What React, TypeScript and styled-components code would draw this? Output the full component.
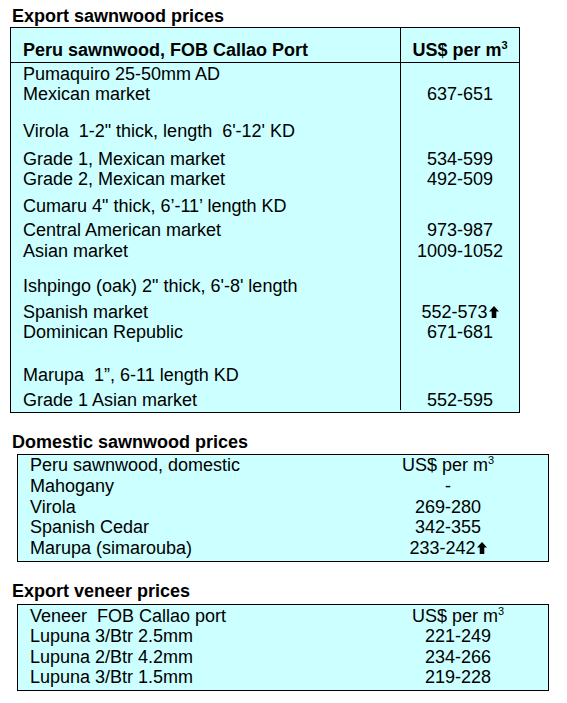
import styled, { createGlobalStyle } from "styled-components";

interface PriceRow {
  label: string;
  value?: string;
  up?: boolean;
  gap?: number;
}

const EXPORT_SAWNWOOD: PriceRow[] = [
  { label: "Pumaquiro 25-50mm AD", gap: 1 },
  { label: "Mexican market", value: "637-651" },
  { label: "Virola  1-2\" thick, length  6'-12' KD", gap: 17 },
  { label: "Grade 1, Mexican market", value: "534-599", gap: 8 },
  { label: "Grade 2, Mexican market", value: "492-509" },
  { label: "Cumaru 4\" thick, 6’-11’ length KD", gap: 7 },
  { label: "Central American market", value: "973-987", gap: 4 },
  { label: "Asian market", value: "1009-1052", gap: 1 },
  { label: "Ishpingo (oak) 2\" thick, 6'-8' length", gap: 15 },
  { label: "Spanish market", value: "552-573", up: true, gap: 6 },
  { label: "Dominican Republic", value: "671-681" },
  { label: "Marupa  1”, 6-11 length KD", gap: 23 },
  { label: "Grade 1 Asian market", value: "552-595", gap: 5 },
];

const DOMESTIC_SAWNWOOD: PriceRow[] = [
  { label: "Mahogany", value: "-" },
  { label: "Virola", value: "269-280" },
  { label: "Spanish Cedar", value: "342-355" },
  { label: "Marupa (simarouba)", value: "233-242", up: true },
];

const EXPORT_VENEER: PriceRow[] = [
  { label: "Lupuna 3/Btr 2.5mm", value: "221-249" },
  { label: "Lupuna 2/Btr 4.2mm", value: "234-266" },
  { label: "Lupuna 3/Btr 1.5mm", value: "219-228" },
];

const GlobalStyle = createGlobalStyle`
  html, body {
    margin: 0;
    padding: 0;
    background: #ffffff;
  }
  body {
    font-family: "Liberation Sans", Arial, sans-serif;
    color: #000000;
  }
`;

const Page = styled.div`
  width: 567px;
  padding-top: 6px;
  font-size: 18px;
  line-height: 20px;
`;

const SectionTitle = styled.h2<{ $top: number; $bottom: number }>`
  margin: ${({ $top, $bottom }) => `${$top}px 0 ${$bottom}px 12px`};
  font-size: 18px;
  line-height: 20px;
  font-weight: 700;
`;

const Table = styled.div<{ $left: number; $width: number; $padTop: number }>`
  box-sizing: border-box;
  margin-left: ${({ $left }) => $left}px;
  width: ${({ $width }) => $width}px;
  border: 1px solid #000000;
  background: #ccffff;
  padding-bottom: 2px;
  padding-top: ${({ $padTop }) => $padTop}px;
`;

const Row = styled.div<{ $labelWidth: number; $lineHeight: number }>`
  display: grid;
  grid-template-columns: ${({ $labelWidth }) => $labelWidth}px 1fr;
  line-height: ${({ $lineHeight }) => $lineHeight}px;
`;

const HeaderRow = styled(Row)`
  border-bottom: 1px solid #000000;
  font-weight: 700;
`;

const Label = styled.div<{ $gap: number; $indent: number }>`
  padding-top: ${({ $gap }) => $gap}px;
  padding-left: ${({ $indent }) => $indent}px;
  white-space: pre;
`;

const Value = styled.div<{ $gap: number; $ruled: boolean }>`
  padding-top: ${({ $gap }) => $gap}px;
  border-left: 1px solid ${({ $ruled }) => ($ruled ? "#000000" : "transparent")};
  text-align: center;
  white-space: nowrap;
`;

const Sup = styled.sup`
  font-size: 11px;
  line-height: 0;
  vertical-align: 7px;
`;

const UpArrow = styled.svg`
  width: 10px;
  height: 12px;
  margin-left: 1px;
  vertical-align: 0px;
`;

function Up() {
  return (
    <UpArrow viewBox="0 0 10 12">
      <path d="M5 0 L10 5.5 L7.3 5.5 L7.3 12 L2.7 12 L2.7 5.5 L0 5.5 Z" fill="#000" />
    </UpArrow>
  );
}

function PerM3() {
  return (
    <>
      US$ per m<Sup>3</Sup>
    </>
  );
}

interface PriceTableProps {
  left: number;
  width: number;
  labelWidth: number;
  lineHeight: number;
  padTop: number;
  ruled: boolean;
  heading: string;
  boldHeader?: boolean;
  rows: PriceRow[];
}

function PriceTable({
  left,
  width,
  labelWidth,
  lineHeight,
  padTop,
  ruled,
  heading,
  boldHeader,
  rows,
}: PriceTableProps) {
  return (
    <Table $left={left} $width={width} $padTop={boldHeader ? 0 : padTop}>
      {boldHeader ? (
        <HeaderRow $labelWidth={labelWidth} $lineHeight={20}>
          <Label $gap={12} $indent={12} style={{ paddingBottom: 2 }}>
            {heading}
          </Label>
          <Value $gap={12} $ruled={ruled}>
            <PerM3 />
          </Value>
        </HeaderRow>
      ) : (
        <Row $labelWidth={labelWidth} $lineHeight={lineHeight}>
          <Label $gap={0} $indent={12}>
            {heading}
          </Label>
          <Value $gap={0} $ruled={ruled}>
            <PerM3 />
          </Value>
        </Row>
      )}
      {rows.map((row) => (
        <Row key={row.label} $labelWidth={labelWidth} $lineHeight={lineHeight}>
          <Label $gap={row.gap ?? 0} $indent={12}>
            {row.label}
          </Label>
          <Value $gap={row.gap ?? 0} $ruled={ruled}>
            {row.value}
            {row.up && <Up />}
          </Value>
        </Row>
      ))}
    </Table>
  );
}

export default function App() {
  return (
    <>
      <GlobalStyle />
      <Page>
        <SectionTitle $top={0} $bottom={1}>
          Export sawnwood prices
        </SectionTitle>
        <PriceTable
          left={10}
          width={510}
          labelWidth={389}
          lineHeight={20}
          padTop={0}
          ruled
          boldHeader
          heading="Peru sawnwood, FOB Callao Port"
          rows={EXPORT_SAWNWOOD}
        />

        <SectionTitle $top={19} $bottom={2}>
          Domestic sawnwood prices
        </SectionTitle>
        <PriceTable
          left={17}
          width={532}
          labelWidth={329}
          lineHeight={20.8}
          padTop={0}
          ruled={false}
          heading="Peru sawnwood, domestic"
          rows={DOMESTIC_SAWNWOOD}
        />

        <SectionTitle $top={19} $bottom={3}>
          Export veneer prices
        </SectionTitle>
        <PriceTable
          left={17}
          width={532}
          labelWidth={349}
          lineHeight={20.4}
          padTop={1}
          ruled={false}
          heading="Veneer  FOB Callao port"
          rows={EXPORT_VENEER}
        />
      </Page>
    </>
  );
}
